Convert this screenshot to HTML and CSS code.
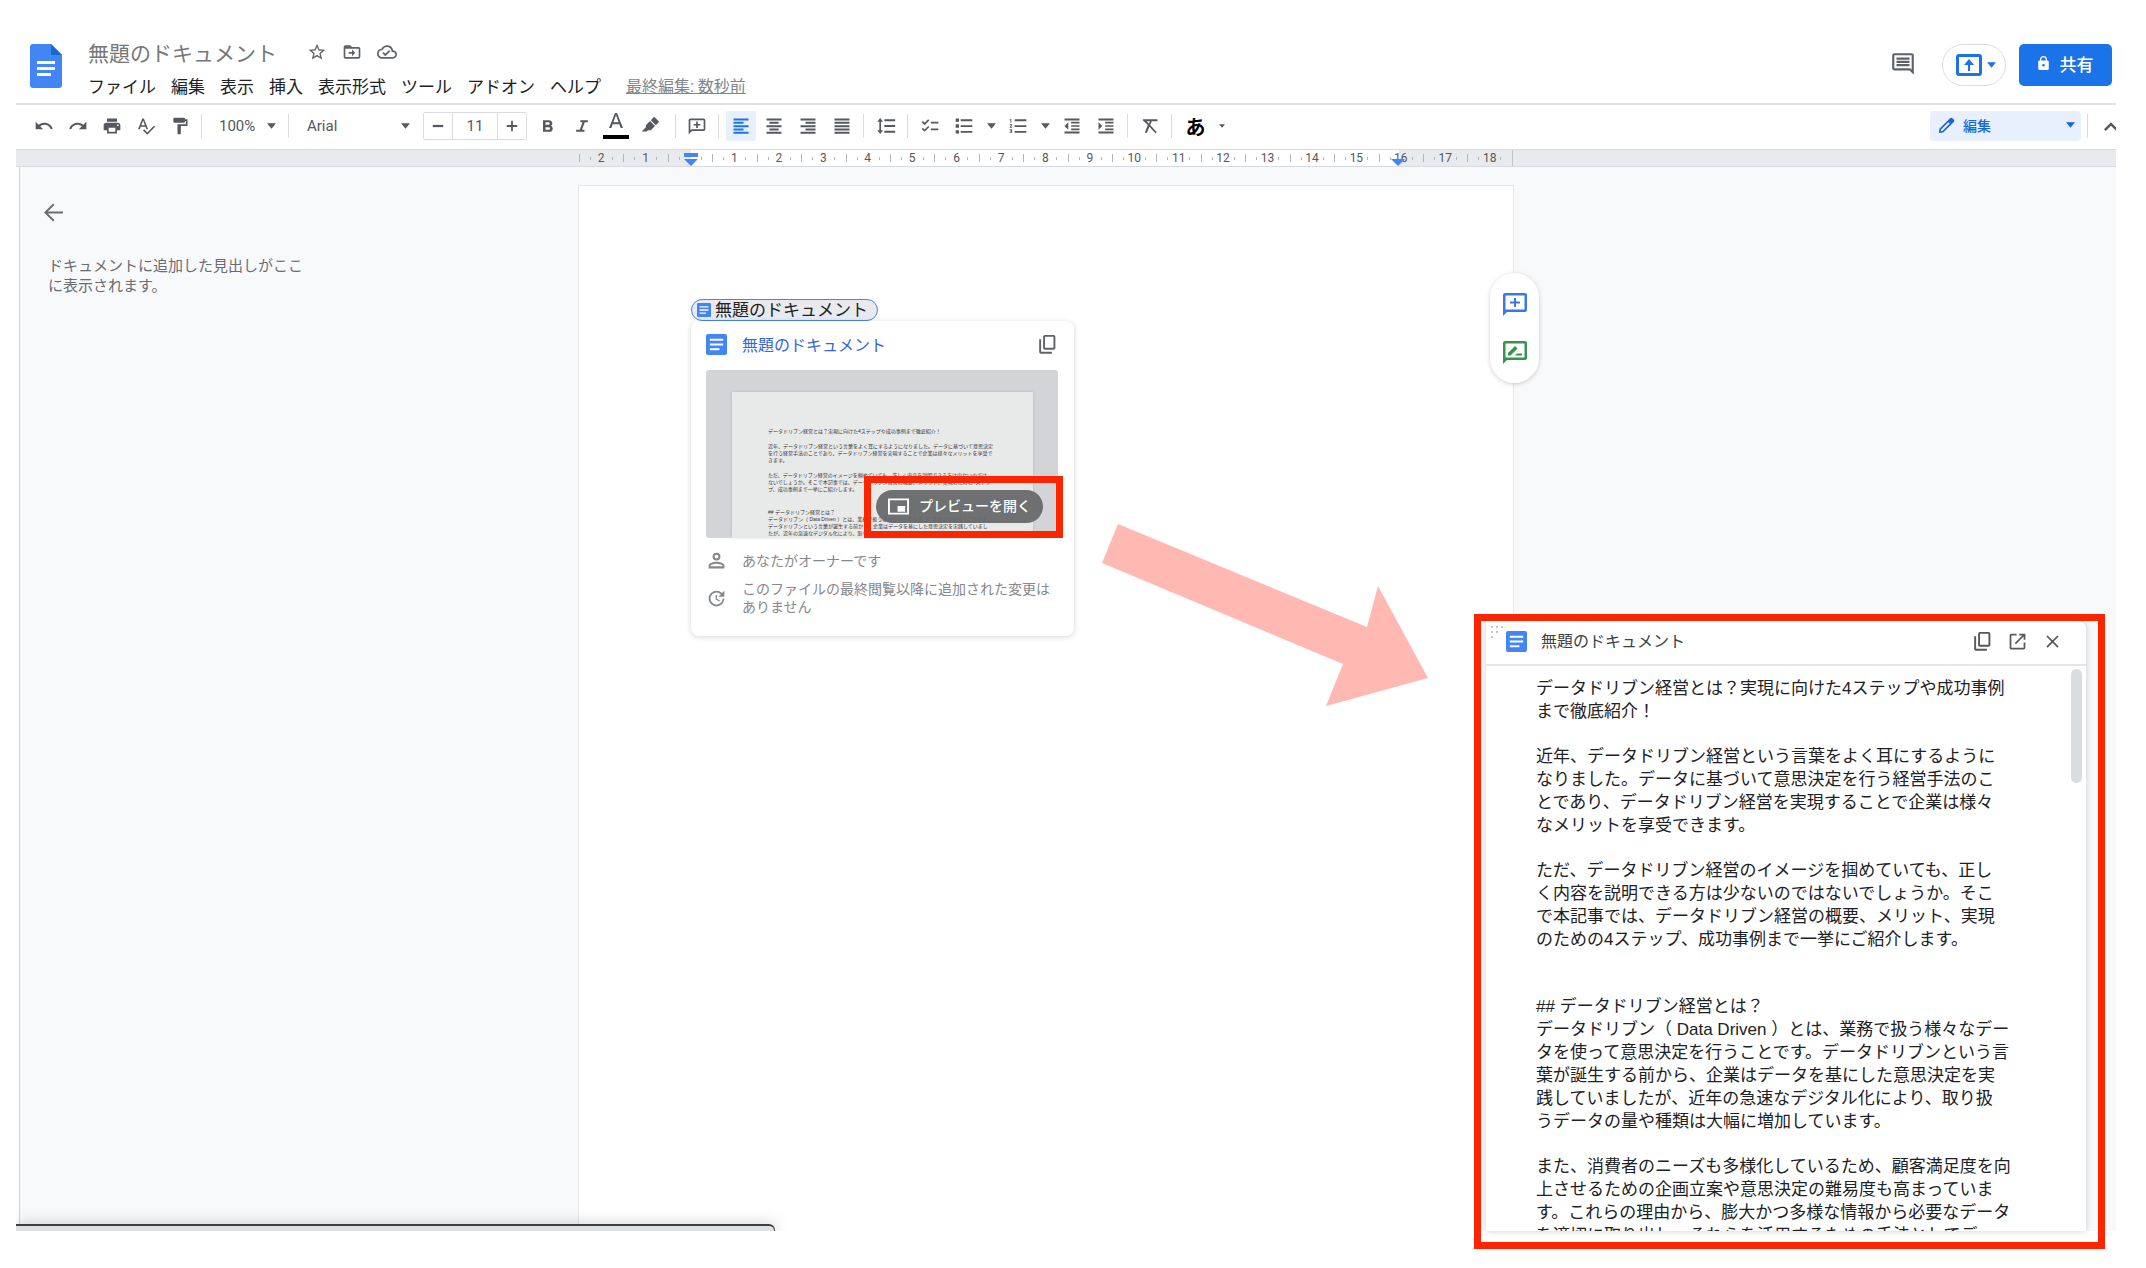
FILE: index.html
```html
<!DOCTYPE html>
<html lang="ja">
<head>
<meta charset="utf-8">
<meta name="viewport" content="width=device-width, initial-scale=1">
<title>無題のドキュメント</title>
<link rel="stylesheet" href="styles.css">
</head>
<body>
<svg class="defs" aria-hidden="true">
  <symbol id="doc" viewBox="0 0 22 22"><rect width="22" height="22" rx="2" fill="#4285f4"/><path d="M4 5h14v2H4zM4 10h14v2H4zM4 15h10v2H4z" fill="#fff"/></symbol>
  <symbol id="copy" viewBox="0 0 24 24"><path d="M19 1H9a2 2 0 0 0-2 2v13c0 1.100.9 2 2 2h10a2 2 0 0 0 2-2V3a2 2 0 0 0-2-2zm-.2 14.800H9.200V3.200h9.600zM2.500 6v14.500a2 2 0 0 0 2 2H17v-2.200H4.700V6z"/></symbol>
  <symbol id="caret" viewBox="0 0 10 6"><path d="M0 0h10L5 6z"/></symbol>
</svg>

<div class="app">
  <header class="header">
    <a class="logo" href="#" aria-label="ドキュメント ホーム">
      <svg width="32" height="44" viewBox="0 0 32 44"><path d="M3 0h18l11 11v30a3 3 0 0 1-3 3H3a3 3 0 0 1-3-3V3a3 3 0 0 1 3-3z" fill="#4285f4"/><path d="M21 0l11 11H21z" fill="#1967d2"/><path d="M7 17h18v3H7zM7 23h18v3H7zM7 29h14v3H7z" fill="#fff"/></svg>
    </a>
    <div class="heading">
      <div class="title-row">
        <input class="title" aria-label="ドキュメント名" value="無題のドキュメント">
        <button class="mini" aria-label="スター"><svg viewBox="0 0 24 24"><path d="M22 9.240l-7.190-.62L12 2 9.190 8.630 2 9.240l5.460 4.730L5.820 21 12 17.270 18.180 21l-1.630-7.030zM12 15.400l-3.760 2.270 1-4.280-3.320-2.880 4.380-.38L12 6.100l1.710 4.040 4.380.38-3.320 2.880 1 4.280z"/></svg></button>
        <button class="mini" aria-label="移動"><svg viewBox="0 0 24 24"><path d="M20 6h-8l-2-2H4a2 2 0 0 0-2 2v12c0 1.100.9 2 2 2h16a2 2 0 0 0 2-2V8a2 2 0 0 0-2-2zm0 12H4V8h16zM12 17l4-4-4-4v3H8v2h4z"/></svg></button>
        <button class="mini" aria-label="保存状態"><svg viewBox="0 0 24 24"><path d="M19.350 10.040A7.490 7.490 0 0 0 12 4C9.110 4 6.600 5.640 5.350 8.040A5.994 5.994 0 0 0 0 14c0 3.310 2.690 6 6 6h13c2.760 0 5-2.240 5-5 0-2.640-2.050-4.780-4.650-4.960zM19 18H6c-2.210 0-4-1.790-4-4 0-2.050 1.530-3.760 3.560-3.970l1.070-.11.500-.95A5.469 5.469 0 0 1 12 6c2.620 0 4.880 1.860 5.390 4.430l.3 1.500 1.530.11A2.980 2.980 0 0 1 22 15c0 1.650-1.350 3-3 3zM10 14.200l-2.100-2.100L6.500 13.500 10 17l6-6-1.400-1.400z"/></svg></button>
      </div>
      <nav class="menu">
        <button>ファイル</button><button>編集</button><button>表示</button><button>挿入</button><button>表示形式</button><button>ツール</button><button>アドオン</button><button>ヘルプ</button>
        <a class="last-edit" href="#">最終編集: 数秒前</a>
      </nav>
    </div>
    <div class="actions">
      <button class="history" aria-label="コメント履歴"><svg viewBox="0 0 24 24"><path d="M21.990 4A2 2 0 0 0 20 2H4a2 2 0 0 0-2 2v12c0 1.100.9 2 2 2h14l4 4zM20 4v13.200L18.800 16H4V4zM6 12h12v2H6zM6 9h12v2H6zM6 6h12v2H6z"/></svg></button>
      <button class="present" aria-label="会議で共有"><svg class="up" viewBox="0 0 26 22"><path d="M3 0h20a3 3 0 0 1 3 3v16a3 3 0 0 1-3 3H3a3 3 0 0 1-3-3V3a3 3 0 0 1 3-3zm0 3v16h20V3zM12 17v-6H8l5-6 5 6h-4v6z"/></svg><svg class="caret"><use href="#caret"/></svg></button>
      <button class="share"><svg viewBox="0 0 12 16"><path d="M10.500 5H10V4a4 4 0 0 0-8 0v1h-.5A1.500 1.500 0 0 0 0 6.500v8A1.500 1.500 0 0 0 1.500 16h9a1.500 1.500 0 0 0 1.500-1.500v-8A1.500 1.500 0 0 0 10.500 5zM3.500 4a2.500 2.500 0 0 1 5 0v1h-5zM6 12a1.500 1.500 0 1 1 0-3 1.500 1.500 0 0 1 0 3z"/></svg>共有</button>
    </div>
  </header>

  <div class="toolbar" role="toolbar">
    <button class="tool" aria-label="元に戻す"><svg viewBox="0 0 24 24"><path d="M12.500 8c-2.650 0-5.050.99-6.900 2.600L2 7v9h9l-3.620-3.620A7.950 7.950 0 0 1 12.500 10.500c3.540 0 6.550 2.310 7.600 5.500l2.370-.78C21.080 11.030 17.150 8 12.500 8z"/></svg></button>
    <button class="tool" aria-label="やり直し"><svg viewBox="0 0 24 24"><path d="M18.400 10.600A10.450 10.450 0 0 0 11.500 8c-4.650 0-8.580 3.030-9.960 7.220L3.900 16a8.002 8.002 0 0 1 7.600-5.500c1.950 0 3.730.72 5.120 1.880L13 16h9V7z"/></svg></button>
    <button class="tool" aria-label="印刷"><svg viewBox="0 0 24 24"><path d="M19 8H5c-1.660 0-3 1.340-3 3v6h4v4h12v-4h4v-6c0-1.660-1.340-3-3-3zm-3 11H8v-5h8zm3-7a1 1 0 1 1 0-2 1 1 0 0 1 0 2zM18 3H6v4h12z"/></svg></button>
    <button class="tool" aria-label="スペルチェック"><svg viewBox="0 0 24 24"><path d="M12.450 16h2.090L9.430 3H7.570L2.460 16h2.090l1.120-3h5.640zm-6.020-5L8.500 5.480 10.570 11zm15.160.59l-8.090 8.090L9.830 16l-1.410 1.410 5.090 5.090L23 13z"/></svg></button>
    <button class="tool" aria-label="書式を貼り付け"><svg viewBox="0 0 24 24"><path d="M18 4V3a1 1 0 0 0-1-1H5a1 1 0 0 0-1 1v4a1 1 0 0 0 1 1h12a1 1 0 0 0 1-1V6h1v4H9v11a1 1 0 0 0 1 1h2a1 1 0 0 0 1-1v-9h8V4z"/></svg></button>
    <span class="sep"></span>
    <button class="zoom">100%<svg class="caret"><use href="#caret"/></svg></button>
    <span class="sep"></span>
    <button class="font">Arial<svg class="caret"><use href="#caret"/></svg></button>
    <div class="size">
      <button aria-label="縮小"><svg viewBox="0 0 24 24"><path d="M5 10.500h14v3H5z"/></svg></button>
      <input aria-label="フォントサイズ" value="11">
      <button aria-label="拡大"><svg viewBox="0 0 24 24"><path d="M19 13.200h-5.800V19h-2.400v-5.800H5v-2.400h5.800V5h2.400v5.800H19z"/></svg></button>
    </div>
    <button class="tool" aria-label="太字"><svg viewBox="0 0 24 24"><path d="M15.600 11.800c1-.7 1.600-1.800 1.600-2.800 0-2.300-1.700-4-4-4H6v14h8c2.100 0 3.700-1.700 3.700-3.800 0-1.500-.8-2.800-2.100-3.400zM9 7.500h3.500a1.500 1.500 0 0 1 0 3H9zm4 9H9v-3h4a1.500 1.500 0 0 1 0 3z"/></svg></button>
    <button class="tool" aria-label="斜体"><svg viewBox="0 0 24 24"><path d="M10 5v2.500h2.600L9.300 16.500H5V19h10v-2.500h-3l3.300-9H19V5z"/></svg></button>
    <button class="tool" aria-label="文字色"><svg class="tall" viewBox="0 0 26 28"><path d="M12 1h2l6 15h-2.300l-1.400-3.800H9.700L8.300 16H6zM10.400 10.200h5.200L13 3.300z"/><path d="M0 23h26v4H0z" fill="#000"/></svg></button>
    <button class="tool marker-pen" aria-label="ハイライト"><svg viewBox="0 0 24 24"><path d="M17 1l6 6-4 4-6-6zM12 6l6 6-5 5H9.500L8 18.500H2L7 13.500V11z"/></svg></button>
    <span class="sep"></span>
    <button class="tool" aria-label="コメントを追加"><svg viewBox="0 0 24 24"><path d="M20 3H4a2 2 0 0 0-2 2v17l4-4h14a2 2 0 0 0 2-2V5a2 2 0 0 0-2-2zm0 13H5.200L4 17.200V5h16zM11 14.500h2v-3h3v-2h-3v-3h-2v3H8v2h3z"/></svg></button>
    <span class="sep"></span>
    <button class="tool active" aria-label="左揃え"><svg viewBox="0 0 24 24"><path d="M3 3h18v2.400H3zM3 7h12v2.400H3zM3 11h18v2.400H3zM3 15h12v2.400H3zM3 19h18v2.400H3z"/></svg></button>
    <button class="tool" aria-label="中央揃え"><svg viewBox="0 0 24 24"><path d="M3 3h18v2.400H3zM6.500 7h11v2.400h-11zM3 11h18v2.400H3zM6.500 15h11v2.400h-11zM3 19h18v2.400H3z"/></svg></button>
    <button class="tool" aria-label="右揃え"><svg viewBox="0 0 24 24"><path d="M3 3h18v2.400H3zM9 7h12v2.400H9zM3 11h18v2.400H3zM9 15h12v2.400H9zM3 19h18v2.400H3z"/></svg></button>
    <button class="tool" aria-label="両端揃え"><svg viewBox="0 0 24 24"><path d="M3 3h18v2.400H3zM3 7h18v2.400H3zM3 11h18v2.400H3zM3 15h18v2.400H3zM3 19h18v2.400H3z"/></svg></button>
    <span class="sep"></span>
    <button class="tool" aria-label="行間隔"><svg viewBox="0 0 24 24"><path d="M6 7h2.500L5 2.500 1.500 7H4v10H1.500L5 21.500 8.500 17H6zM10 4v2.400h13V4zm0 16h13v-2.400H10zm0-6.800h13v-2.400H10z"/></svg></button>
    <span class="sep"></span>
    <button class="tool" aria-label="チェックリスト"><svg viewBox="0 0 24 24"><path d="M22 7h-9v2h9zm0 8h-9v2h9zM5.540 11L2 7.460l1.410-1.410 2.120 2.120 4.240-4.240 1.410 1.410zm0 8L2 15.460l1.410-1.410 2.120 2.120 4.240-4.240 1.410 1.410z"/></svg></button>
    <button class="tool" aria-label="箇条書き"><svg viewBox="0 0 24 24"><path d="M2 3h4v4H2zM2 10h4v4H2zM2 17h4v4H2zM8 4h14v2.200H8zM8 11h14v2.200H8zM8 18h14v2.200H8z"/></svg></button>
    <button class="drop" aria-label="箇条書きの種類"><svg class="caret"><use href="#caret"/></svg></button>
    <button class="tool" aria-label="番号付きリスト"><svg viewBox="0 0 24 24"><path d="M2 17h2v.5H3v1h1v.5H2v1h3v-4H2zm1-9h1V4H2v1h1zm-1 3h1.800L2 13.100v.9h3v-1H3.200L5 10.900V10H2zM8 4h14v2.200H8zM8 11h14v2.200H8zM8 18h14v2.200H8z"/></svg></button>
    <button class="drop" aria-label="番号の種類"><svg class="caret"><use href="#caret"/></svg></button>
    <button class="tool" aria-label="インデント減"><svg viewBox="0 0 24 24"><path d="M11 17h10v-2H11zm-8-5l4.500 4.500v-9zM3 21h18v-2.300H3zM3 3v2.300h18V3zm8 6h10V7H11zm0 4h10v-2H11z"/></svg></button>
    <button class="tool" aria-label="インデント増"><svg viewBox="0 0 24 24"><path d="M3 21h18v-2.300H3zM3 7.500v9L7.500 12zM11 17h10v-2H11zM3 3v2.300h18V3zm8 6h10V7H11zm0 4h10v-2H11z"/></svg></button>
    <span class="sep"></span>
    <button class="tool" aria-label="書式をクリア"><svg viewBox="0 0 24 24"><path d="M4 4h17v2.400h-6.800l-2 4.400 7.800 8.500-1.500 1.500-7.200-7.900L8.300 20H5.700l3.700-9.100L3 4.900l1-.9zm4.100 2.400l2.600 2.800 1.200-2.800z"/></svg></button>
    <span class="sep"></span>
    <button class="ime">あ</button>
    <button class="drop small" aria-label="入力ツール"><svg class="caret"><use href="#caret"/></svg></button>
    <button class="mode"><svg class="pen" viewBox="0 0 18 18"><path d="M12.500 1.500a2.200 2.200 0 0 1 3.100 0l.9.9a2.200 2.200 0 0 1 0 3.100L5.500 16.500 1 17l.5-4.500zM11 5.500l-7.800 7.800-.2 1.700 1.700-.2L12.500 7z"/></svg>編集<svg class="caret"><use href="#caret"/></svg></button>
    <span class="sep"></span>
    <button class="collapse" aria-label="メニューを非表示"><svg viewBox="0 0 16 10"><path d="M8 0l8 8-2 2-6-6-6 6-2-2z"/></svg></button>
  </div>

  <div class="ruler">
    <div class="scale">
      <i>2</i><i>1</i><i></i><i>1</i><i>2</i><i>3</i><i>4</i><i>5</i><i>6</i><i>7</i><i>8</i><i>9</i><i>10</i><i>11</i><i>12</i><i>13</i><i>14</i><i>15</i><i>16</i><i>17</i><i>18</i>
      <svg class="marker left" viewBox="0 0 16 14"><path d="M1 0h14v4H1zM1 6h14l-7 7z"/></svg>
      <svg class="marker right" viewBox="0 0 16 14"><path d="M1 6h14l-7 7z"/></svg>
    </div>
  </div>

  <main class="workspace">
    <aside class="outline">
      <button class="back" aria-label="概要を閉じる"><svg viewBox="0 0 20 20"><path d="M20 9v2H4l7 7-1.400 1.500L0 10 9.600.5 11 2 4 9z"/></svg></button>
      <p>ドキュメントに追加した見出しがここ<br>に表示されます。</p>
    </aside>

    <article class="page">
      <a class="chip" href="#"><svg><use href="#doc"/></svg>無題のドキュメント</a>
      <section class="card">
        <div class="card-head"><svg class="doc"><use href="#doc"/></svg><a href="#">無題のドキュメント</a><button aria-label="リンクをコピー"><svg><use href="#copy"/></svg></button></div>
        <div class="thumb">
          <div class="sheet">
            <p>データドリブン経営とは？実現に向けた4ステップや成功事例まで徹底紹介！</p>
            <p>近年、データドリブン経営という言葉をよく耳にするようになりました。データに基づいて意思決定<br>を行う経営手法のことであり、データドリブン経営を実現することで企業は様々なメリットを享受で<br>きます。</p>
            <p>ただ、データドリブン経営のイメージを掴めていても、正しく内容を説明できる方は少ないのでは<br>ないでしょうか。そこで本記事では、データドリブン経営の概要、メリット、実現のための4ステッ<br>プ、成功事例まで一挙にご紹介します。</p>
            <p class="section">## データドリブン経営とは？<br>データドリブン（ Data Driven ）とは、業務で扱う様々なデータを使って意思決定を行うことです。<br>データドリブンという言葉が誕生する前から、企業はデータを基にした意思決定を実践していまし<br>たが、近年の急速なデジタル化により、取り扱うデータの量や種類は大幅に増加しています。</p>
          </div>
          <div class="callout small-callout"></div>
          <button class="open-preview"><svg viewBox="0 0 22 17"><path d="M0 0h22v17H0zM2 2v13h18V2zM10 8h8v6h-8z"/></svg><span>プレビューを開く</span></button>
        </div>
        <div class="meta"><svg viewBox="0 0 24 24"><path d="M12 3a4.500 4.500 0 1 0 0 9 4.500 4.500 0 0 0 0-9zm0 2.300a2.200 2.200 0 1 1 0 4.400 2.200 2.200 0 0 1 0-4.400zM12 13.500c-3.500 0-9 1.300-9 4.500v3h18v-3c0-3.200-5.500-4.500-9-4.500zm-6.700 5.200V18c0-1 3.400-2.200 6.700-2.200s6.700 1.200 6.700 2.200v.7z"/></svg><p>あなたがオーナーです</p></div>
        <div class="meta"><svg viewBox="0 0 24 24"><path d="M21 10.120h-6.780l2.740-2.820a7 7 0 0 0-9.800-.1 6.875 6.875 0 0 0 0 9.790 7.020 7.020 0 0 0 9.890 0C18.320 15.730 19 14.080 19 12.100h2c0 1.980-.88 4.550-2.640 6.290-3.510 3.480-9.210 3.480-12.720 0-3.500-3.470-3.530-9.110-.02-12.580a8.987 8.987 0 0 1 12.650 0L21 3zM12.500 8v4.250l3.500 2.080-.72 1.210L11 13V8z"/></svg><p>このファイルの最終閲覧以降に追加された変更は<br>ありません</p></div>
      </section>
      <div class="side-actions">
        <button class="add" aria-label="コメントを追加"><svg viewBox="0 0 24 24"><path d="M22 1H2a2 2 0 0 0-2 2v21l4-4h18a2 2 0 0 0 2-2V3a2 2 0 0 0-2-2zm-.5 16.500h-19v-14h19zM11 15h2v-3.500h4v-2h-4V6h-2v3.500H7v2h4z"/></svg></button>
        <button class="suggest" aria-label="編集を提案"><svg viewBox="0 0 24 24"><path d="M22 1H2a2 2 0 0 0-2 2v21l4-4h18a2 2 0 0 0 2-2V3a2 2 0 0 0-2-2zm-.5 16.500h-19v-14h19zM5 15.500V13l7-7 2.500 2.500-7 7zM12 15.500l2-2h5v2z"/></svg></button>
      </div>
    </article>
  </main>

  <div class="status"><div></div></div>

  <svg class="arrow" viewBox="0 0 328 184"><path d="M17 1L266 104 277 63 327 155 225 183 242 141 1 40z"/></svg>

  <section class="preview">
    <header class="preview-head">
      <svg class="grip" viewBox="0 0 12 12"><path d="M0 0h2v2H0zM5 0h2v2H5zM10 0h2v2h-2zM0 5h2v2H0zM5 5h2v2H5zM0 10h2v2H0z"/></svg>
      <svg class="doc"><use href="#doc"/></svg>
      <h2>無題のドキュメント</h2>
      <button aria-label="リンクをコピー"><svg><use href="#copy"/></svg></button>
      <button aria-label="新しいタブで開く"><svg viewBox="0 0 24 24"><path d="M19 19H5V5h6V3H5a2 2 0 0 0-2 2v14c0 1.100.9 2 2 2h14a2 2 0 0 0 2-2v-6h-2zM14 3v2h3.600l-8.800 8.800 1.400 1.400L19 6.400V10h2V3z"/></svg></button>
      <button aria-label="閉じる"><svg viewBox="0 0 24 24"><path d="M19 6.400L17.600 5 12 10.600 6.400 5 5 6.400l5.600 5.600L5 17.600 6.400 19l5.600-5.600 5.600 5.600 1.400-1.400-5.600-5.600z"/></svg></button>
    </header>
    <div class="preview-body">
      <p>データドリブン経営とは？実現に向けた4ステップや成功事例<br>まで徹底紹介！</p>
      <p>近年、データドリブン経営という言葉をよく耳にするように<br>なりました。データに基づいて意思決定を行う経営手法のこ<br>とであり、データドリブン経営を実現することで企業は様々<br>なメリットを享受できます。</p>
      <p>ただ、データドリブン経営のイメージを掴めていても、正し<br>く内容を説明できる方は少ないのではないでしょうか。そこ<br>で本記事では、データドリブン経営の概要、メリット、実現<br>のための4ステップ、成功事例まで一挙にご紹介します。</p>
      <p class="section">## データドリブン経営とは？<br>データドリブン（ Data Driven ）とは、業務で扱う様々なデー<br>タを使って意思決定を行うことです。データドリブンという言<br>葉が誕生する前から、企業はデータを基にした意思決定を実<br>践していましたが、近年の急速なデジタル化により、取り扱<br>うデータの量や種類は大幅に増加しています。</p>
      <p>また、消費者のニーズも多様化しているため、顧客満足度を向<br>上させるための企画立案や意思決定の難易度も高まっていま<br>す。これらの理由から、膨大かつ多様な情報から必要なデータ<br>を適切に取り出し、それらを活用するための手法としてデー</p>
      <div class="thumb-bar"></div>
    </div>
  </section>
  <div class="callout large-callout"></div>
</div>
</body>
</html>
```
FILE: styles.css
```css
* { box-sizing: border-box; }

body {
  margin: 0;
  background: #fff;
  color: #202124;
  font-family: Roboto, "Noto Sans CJK JP", sans-serif;
}

p, h2 { margin: 0; font-weight: 400; }

button {
  display: inline-flex;
  align-items: center;
  justify-content: center;
  padding: 0;
  border: 0;
  background: none;
  color: inherit;
  font: inherit;
}

input {
  padding: 0;
  border: 0;
  background: none;
  font: inherit;
  outline: 0;
}

a { color: inherit; text-decoration: none; }

svg { display: block; flex: none; fill: currentColor; }

.defs { position: absolute; width: 0; height: 0; }

.caret { width: 9px; height: 6px; }

.app {
  position: relative;
  margin: 0 30px 0 16px;
  padding-bottom: 37px;
  overflow: hidden;
}

/* Header */
.header {
  display: flex;
  height: 105px;
  padding: 35px 4px 0 14px;
  border-bottom: 2px solid #e0e1e3;
}

.logo { padding-top: 9px; }

.heading { flex: 1; padding-left: 26px; }

.title-row { display: flex; align-items: center; height: 34px; }

.title { width: 211px; height: 32px; color: #757779; font-size: 21px; }

.mini { width: 35px; color: #5f6368; }

.mini svg { width: 20px; height: 20px; }

.menu {
  display: flex;
  align-items: center;
  gap: 15px;
  height: 36px;
  font-size: 17px;
  line-height: 24px;
  white-space: nowrap;
}

.last-edit {
  margin-left: 10px;
  color: #80868b;
  font-size: 16px;
  line-height: 20px;
  text-decoration: underline;
}

.actions { display: flex; align-items: flex-start; gap: 13px; padding-top: 9px; color: #5f6368; }

.history { width: 52px; height: 40px; }

.history svg { width: 28px; height: 26px; }

.present {
  gap: 5px;
  width: 64px;
  height: 42px;
  padding-left: 4px;
  border: 1px solid #dadce0;
  border-radius: 21px;
  color: #1a73e8;
}

.present .up { width: 26px; height: 22px; }

.share {
  gap: 11px;
  width: 93px;
  height: 42px;
  padding-bottom: 4px;
  border-radius: 5px;
  background: #1a73e8;
  color: #fff;
  font-size: 17px;
  font-weight: 500;
}

.share svg { width: 11px; height: 14px; }

/* Toolbar */
.toolbar {
  display: flex;
  align-items: center;
  height: 44px;
  padding: 0 0 2px 11px;
  color: #55585c;
  font-size: 15px;
}

.tool { width: 34px; height: 30px; }

.tool svg { width: 20px; height: 20px; }

.tool .tall { width: 26px; height: 28px; }

.tool.marker-pen { margin-right: 4px; }

.tool.active {
  width: 30px;
  margin: 0 1px 0 3px;
  border-radius: 2px;
  background: #e8f0fe;
  color: #1a73e8;
}

.sep {
  flex: none;
  width: 1px;
  height: 24px;
  margin: 0 4px;
  background: #dadce0;
}

.active ~ .sep { margin-right: 5px; }

.zoom { justify-content: space-between; width: 78px; padding: 0 8px 0 13px; }

.font { justify-content: space-between; width: 130px; padding: 0 13px 0 14px; }

.size {
  display: flex;
  width: 104px;
  height: 28px;
  margin-right: 4px;
  border: 1px solid #dadce0;
  border-radius: 2px;
}

.size button { width: 28px; }

.size svg { width: 18px; height: 18px; }

.size input {
  width: 46px;
  border: solid #dadce0;
  border-width: 0 1px;
  color: inherit;
  text-align: center;
}

.drop { width: 20px; height: 30px; }

.drop.small { width: 16px; }

.drop.small .caret { width: 6px; }

.ime { width: 37px; color: #000; font-size: 20px; font-weight: 700; }

.mode {
  gap: 8px;
  justify-content: flex-start;
  width: 151px;
  height: 30px;
  margin-left: auto;
  margin-right: 2px;
  padding: 0 6px 2px 8px;
  border-radius: 4px;
  background: #e8f0fe;
  color: #1967d2;
  font-size: 14px;
  font-weight: 500;
}

.mode .pen { width: 17px; height: 17px; }

.mode .caret { margin-left: auto; }

.collapse { width: 23px; justify-content: flex-end; overflow: hidden; }

.collapse svg { width: 14px; height: 9px; margin-right: -2px; }

/* Ruler */
.ruler {
  height: 18px;
  padding-left: 563px;
  border: solid #d8dadd;
  border-width: 1px 0;
  background: #e8eaed;
}

.scale {
  position: relative;
  display: flex;
  width: 934px;
  height: 16px;
  background: linear-gradient(#fff, #fff) 112px 0 / 708px 100% no-repeat;
}

.scale i {
  position: relative;
  flex: 1;
  color: #55585c;
  font-size: 12px;
  font-style: normal;
  line-height: 16px;
  text-align: center;
  background:
    linear-gradient(#b4b7bb, #b4b7bb) 0 4px / 1px 8px no-repeat,
    linear-gradient(#b4b7bb, #b4b7bb) 11px 7px / 1px 3px no-repeat,
    linear-gradient(#b4b7bb, #b4b7bb) 33px 7px / 1px 3px no-repeat;
}

.scale i:nth-child(21) { border-right: 1px solid #c0c3c7; }

.marker { position: absolute; top: 3px; width: 16px; height: 14px; fill: #4285f4; }

.marker.left { left: 104px; }

.marker.right { left: 811px; }

/* Workspace */
.workspace {
  display: grid;
  grid-template-columns: 562px 936px 1fr;
  min-height: 1064px;
  margin-left: 3px;
  border-left: 1px solid #cfd1d4;
  background: #f8f9fa;
}

.outline {
  padding: 35px 0 0 28px;
  margin-right: 4px;
  color: #696c70;
  font-size: 15px;
  line-height: 20px;
}

.back { width: 20px; height: 20px; margin: 0 0 34px -5px; }

.back svg { width: 19px; height: 19px; }

.page {
  position: relative;
  margin: 18px 4px 0 -4px;
  padding: 113px 112px 0;
  border: 1px solid #e6e8ea;
  border-bottom: 0;
  background: #fff;
  width: 936px;
}

.chip {
  display: flex;
  align-items: center;
  gap: 4px;
  width: 187px;
  height: 22px;
  padding-left: 5px;
  border: 1px solid #4285f4;
  border-radius: 11px;
  background: #e8eaed;
  color: #202124;
  font-size: 17px;
  line-height: 20px;
  white-space: nowrap;
}

.chip svg { width: 14px; height: 14px; }

.card {
  width: 383px;
  height: 315px;
  padding: 12px 16px 0 15px;
  border-radius: 8px;
  background: #fff;
  box-shadow: 0 1px 4px 1px #3c404328;
}

.card-head {
  display: flex;
  align-items: center;
  height: 22px;
  margin-bottom: 15px;
  color: #3367d6;
  font-size: 16px;
}

.card-head .doc { width: 21px; height: 21px; margin-right: 15px; }

.card-head button { margin-left: auto; color: #5f6368; }

.card-head button svg { width: 21px; height: 21px; }

.thumb {
  position: relative;
  height: 168px;
  margin-bottom: 12px;
  padding: 22px 25px 0 26px;
  border-radius: 3px;
  background: #d2d4d7;
}

.sheet {
  height: 146px;
  padding: 36px 0 0 36px;
  overflow: hidden;
  background: #e8e9e9;
  box-shadow: 0 0 3px #0002;
  color: #333;
  font-family: "Liberation Sans", "Noto Sans CJK JP", sans-serif;
  font-size: 5px;
  line-height: 7px;
  white-space: nowrap;
}

.sheet p { margin-bottom: 8px; }

.sheet .section { margin-top: 16px; }

.open-preview {
  position: absolute;
  right: 15px;
  bottom: 15px;
  gap: 10px;
  width: 167px;
  height: 33px;
  border-radius: 17px;
  background: #66686af0;
  color: #fff;
  font-size: 14px;
  font-weight: 500;
}

.open-preview svg { width: 21px; height: 17px; }

.open-preview span { padding-bottom: 3px; }

.callout { position: absolute; border: 7px solid #fb2600; }

.small-callout { right: -5px; bottom: 0; width: 199px; height: 62px; }

.meta {
  display: flex;
  align-items: center;
  gap: 15px;
  margin-bottom: 9px;
  color: #85888c;
  font-size: 14px;
  line-height: 18px;
  white-space: nowrap;
}

.meta svg { width: 21px; height: 21px; }

.side-actions {
  position: absolute;
  top: 87px;
  right: -26px;
  display: flex;
  flex-direction: column;
  align-items: center;
  justify-content: center;
  gap: 24px;
  width: 49px;
  height: 110px;
  border-radius: 25px;
  background: #fff;
  box-shadow: 0 1px 4px #3c404340;
}

.side-actions svg { width: 24px; height: 24px; }

.add { color: #3b78e7; }

.suggest { color: #34934d; }

/* Browser status bar along the lower edge */
.status {
  position: absolute;
  left: 0;
  bottom: 37px;
  width: 780px;
  height: 30px;
  padding-top: 23px;
  overflow: hidden;
}

.status div {
  width: 759px;
  height: 12px;
  border: solid #3c4043;
  border-width: 2px 1px 0 0;
  border-radius: 0 6px 0 0;
  background: #dfe1e3;
  box-shadow: 0 0 16px #0003;
}

.arrow {
  position: absolute;
  top: 523px;
  left: 1085px;
  width: 328px;
  height: 184px;
  fill: #ffb8b2;
}

/* Floating preview */
.preview {
  position: absolute;
  top: 621px;
  right: 30px;
  display: flex;
  flex-direction: column;
  width: 600px;
  height: 610px;
  overflow: hidden;
  border-radius: 0 8px 0 0;
  background: #fff;
  box-shadow: 0 0 6px #0003;
}

.preview-head {
  position: relative;
  display: flex;
  flex: none;
  align-items: center;
  height: 45px;
  padding: 0 16px 2px 20px;
  border-bottom: 2px solid #e4e6e8;
  color: #55585c;
}

.preview-head h2 { flex: 1; color: #3c4043; font-size: 16px; line-height: 24px; }

.preview-head .doc { width: 21px; height: 21px; margin-right: 14px; }

.preview-head button { width: 35px; height: 30px; }

.preview-head button svg { width: 21px; height: 21px; }

.grip { position: absolute; top: 5px; left: 5px; width: 12px; height: 12px; fill: #c4c7ca; }

.preview-body {
  position: relative;
  flex: 1;
  min-height: 0;
  padding: 11px 0 0 50px;
  font-family: "Liberation Sans", "Noto Sans CJK JP", sans-serif;
  font-size: 17px;
  line-height: 23px;
  white-space: nowrap;
}

.preview-body p { margin-bottom: 22px; }

.preview-body .section { padding-top: 22px; }

.thumb-bar {
  position: absolute;
  top: 3px;
  right: 4px;
  width: 11px;
  height: 114px;
  border-radius: 6px;
  background: #dadce0;
}

.large-callout { top: 614px; right: 11px; width: 631px; height: 635px; }
```
